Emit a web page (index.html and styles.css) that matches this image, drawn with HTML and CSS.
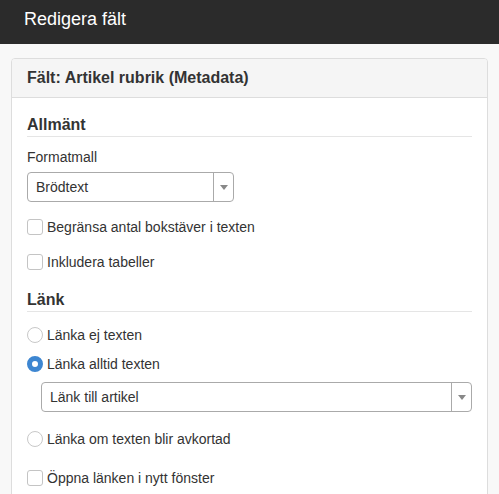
FILE: index.html
```html
<!DOCTYPE html>
<html lang="sv">
<head>
<meta charset="utf-8">
<title>Redigera fält</title>
<link rel="stylesheet" href="styles.css">
</head>
<body>
<header class="topbar">Redigera fält</header>
<main class="main">
  <section class="panel">
    <div class="panel-heading">Fält: Artikel rubrik (Metadata)</div>
    <div class="panel-body">
      <div class="legend legend-first">Allmänt</div>
      <div class="label">Formatmall</div>
      <div class="select select-style">
        <span class="select-text">Brödtext</span>
        <span class="select-arrow"><span class="tri"></span></span>
      </div>
      <div class="row row-a"><span class="check"></span><span>Begränsa antal bokstäver i texten</span></div>
      <div class="row row-a"><span class="check"></span><span>Inkludera tabeller</span></div>

      <div class="legend legend-second">Länk</div>
      <div class="row row-r1"><span class="radio"></span><span>Länka ej texten</span></div>
      <div class="row row-r2"><span class="radio checked"></span><span>Länka alltid texten</span></div>
      <div class="select select-link">
        <span class="select-text">Länk till artikel</span>
        <span class="select-arrow"><span class="tri"></span></span>
      </div>
      <div class="row row-r3"><span class="radio"></span><span>Länka om texten blir avkortad</span></div>
      <div class="row row-c3"><span class="check"></span><span>Öppna länken i nytt fönster</span></div>
    </div>
  </section>
</main>
</body>
</html>
```
FILE: styles.css
```css
html, body {
  margin: 0;
  padding: 0;
}
body {
  background: #f8f8f8;
  color: #333;
  font-family: "Liberation Sans", Arial, sans-serif;
  font-size: 14px;
  line-height: 20px;
  width: 499px;
  height: 494px;
  overflow: hidden;
}
.topbar {
  height: 44px;
  box-sizing: border-box;
  background: #2b2b2b;
  color: #fff;
  font-size: 18px;
  line-height: 38px;
  padding: 0 0 6px 24px;
}
.main {
  box-sizing: border-box;
  height: 450px;
  overflow: hidden;
  padding: 14px 11px 0 11px;
}
.panel {
  background: #fff;
  border: 1px solid #ddd;
  border-radius: 4px;
  height: 460px;
}
.panel-heading {
  background: #f5f5f5;
  border-bottom: 1px solid #ddd;
  border-radius: 3px 3px 0 0;
  padding: 10px 15px;
  font-size: 16px;
  font-weight: bold;
  line-height: 18px;
}
.panel-body {
  padding: 17px 15px 15px 15px;
}
.legend {
  font-size: 16px;
  font-weight: bold;
  line-height: 20px;
  padding-bottom: 1px;
  border-bottom: 1px solid #e5e5e5;
}
.legend-second {
  margin-top: 18px;
}
.label {
  margin-top: 10px;
}
.select {
  display: flex;
  box-sizing: border-box;
  height: 30px;
  border: 1px solid #aaa;
  border-radius: 4px;
  background: #fff;
  align-items: stretch;
}
.select-style {
  margin-top: 5px;
  width: 207px;
}
.select-link {
  margin-top: 8px;
  margin-left: 14px;
}
.select-text {
  flex: 1;
  padding-left: 8px;
  line-height: 28px;
}
.select-arrow {
  width: 19px;
  border-left: 1px solid #aaa;
  display: flex;
  align-items: center;
  justify-content: center;
}
.tri {
  width: 0;
  height: 0;
  border-left: 4px solid transparent;
  border-right: 4px solid transparent;
  border-top: 5px solid #888;
}
.row {
  display: flex;
  align-items: center;
  gap: 4px;
  line-height: 20px;
}
.row-a { margin-top: 15px; }
.row-r1 { margin-top: 13px; }
.row-r2 { margin-top: 9px; }
.row-r3 { margin-top: 17px; }
.row-c3 { margin-top: 19px; }
.check {
  box-sizing: border-box;
  width: 16px;
  height: 16px;
  border: 1px solid #c4c4c4;
  border-radius: 3px;
  background: #fff;
  flex: none;
}
.radio {
  box-sizing: border-box;
  width: 16px;
  height: 16px;
  border: 1px solid #c8c8c8;
  border-radius: 50%;
  background: #fff;
  flex: none;
}
.radio.checked {
  border: 5px solid #3d86d1;
  background: #fff;
}
```
